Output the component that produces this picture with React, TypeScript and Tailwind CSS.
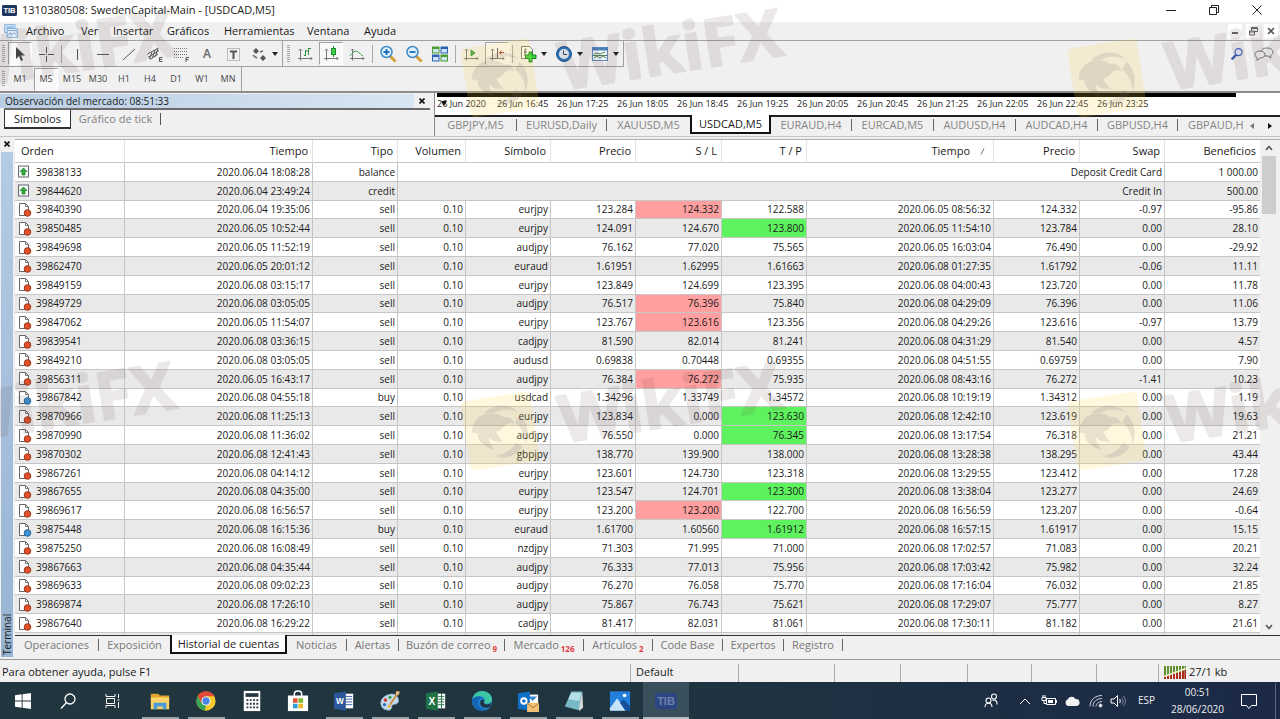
import { clsx } from "clsx";
import type { ReactNode } from "react";

type Deal = [
  order: string,
  opened: string,
  type: string,
  volume: string,
  symbol: string,
  price: string,
  sl: string,
  tp: string,
  closed: string,
  closePrice: string,
  swap: string,
  profit: string,
  hit?: "sl" | "tp"
];

const deals: Deal[] = [
  ["39840390", "2020.06.04 19:35:06", "sell", "0.10", "eurjpy", "123.284", "124.332", "122.588", "2020.06.05 08:56:32", "124.332", "-0.97", "-95.86", "sl"],
  ["39850485", "2020.06.05 10:52:44", "sell", "0.10", "eurjpy", "124.091", "124.670", "123.800", "2020.06.05 11:54:10", "123.784", "0.00", "28.10", "tp"],
  ["39849698", "2020.06.05 11:52:19", "sell", "0.10", "audjpy", "76.162", "77.020", "75.565", "2020.06.05 16:03:04", "76.490", "0.00", "-29.92"],
  ["39862470", "2020.06.05 20:01:12", "sell", "0.10", "euraud", "1.61951", "1.62995", "1.61663", "2020.06.08 01:27:35", "1.61792", "-0.06", "11.11"],
  ["39849159", "2020.06.08 03:15:17", "sell", "0.10", "eurjpy", "123.849", "124.699", "123.395", "2020.06.08 04:00:43", "123.720", "0.00", "11.78"],
  ["39849729", "2020.06.08 03:05:05", "sell", "0.10", "audjpy", "76.517", "76.396", "75.840", "2020.06.08 04:29:09", "76.396", "0.00", "11.06", "sl"],
  ["39847062", "2020.06.05 11:54:07", "sell", "0.10", "eurjpy", "123.767", "123.616", "123.356", "2020.06.08 04:29:26", "123.616", "-0.97", "13.79", "sl"],
  ["39839541", "2020.06.08 03:36:15", "sell", "0.10", "cadjpy", "81.590", "82.014", "81.241", "2020.06.08 04:31:29", "81.540", "0.00", "4.57"],
  ["39849210", "2020.06.08 03:05:05", "sell", "0.10", "audusd", "0.69838", "0.70448", "0.69355", "2020.06.08 04:51:55", "0.69759", "0.00", "7.90"],
  ["39856311", "2020.06.05 16:43:17", "sell", "0.10", "audjpy", "76.384", "76.272", "75.935", "2020.06.08 08:43:16", "76.272", "-1.41", "10.23", "sl"],
  ["39867842", "2020.06.08 04:55:18", "buy", "0.10", "usdcad", "1.34296", "1.33749", "1.34572", "2020.06.08 10:19:19", "1.34312", "0.00", "1.19"],
  ["39870966", "2020.06.08 11:25:13", "sell", "0.10", "eurjpy", "123.834", "0.000", "123.630", "2020.06.08 12:42:10", "123.619", "0.00", "19.63", "tp"],
  ["39870990", "2020.06.08 11:36:02", "sell", "0.10", "audjpy", "76.550", "0.000", "76.345", "2020.06.08 13:17:54", "76.318", "0.00", "21.21", "tp"],
  ["39870302", "2020.06.08 12:41:43", "sell", "0.10", "gbpjpy", "138.770", "139.900", "138.000", "2020.06.08 13:28:38", "138.295", "0.00", "43.44"],
  ["39867261", "2020.06.08 04:14:12", "sell", "0.10", "eurjpy", "123.601", "124.730", "123.318", "2020.06.08 13:29:55", "123.412", "0.00", "17.28"],
  ["39867655", "2020.06.08 04:35:00", "sell", "0.10", "eurjpy", "123.547", "124.701", "123.300", "2020.06.08 13:38:04", "123.277", "0.00", "24.69", "tp"],
  ["39869617", "2020.06.08 16:56:57", "sell", "0.10", "eurjpy", "123.200", "123.200", "122.700", "2020.06.08 16:56:59", "123.207", "0.00", "-0.64", "sl"],
  ["39875448", "2020.06.08 16:15:36", "buy", "0.10", "euraud", "1.61700", "1.60560", "1.61912", "2020.06.08 16:57:15", "1.61917", "0.00", "15.15", "tp"],
  ["39875250", "2020.06.08 16:08:49", "sell", "0.10", "nzdjpy", "71.303", "71.995", "71.000", "2020.06.08 17:02:57", "71.083", "0.00", "20.21"],
  ["39867663", "2020.06.08 04:35:44", "sell", "0.10", "audjpy", "76.333", "77.013", "75.956", "2020.06.08 17:03:42", "75.982", "0.00", "32.24"],
  ["39869633", "2020.06.08 09:02:23", "sell", "0.10", "audjpy", "76.270", "76.058", "75.770", "2020.06.08 17:16:04", "76.032", "0.00", "21.85"],
  ["39869874", "2020.06.08 17:26:10", "sell", "0.10", "audjpy", "75.867", "76.743", "75.621", "2020.06.08 17:29:07", "75.777", "0.00", "8.27"],
  ["39867640", "2020.06.08 16:29:22", "sell", "0.10", "cadjpy", "81.417", "82.031", "81.061", "2020.06.08 17:30:11", "81.182", "0.00", "21.61"],
  ["39877198", "2020.06.08 17:11:38", "sell", "0.10", "eurjpy", "122.648", "124.800", "122.680", "2020.06.08 17:30:38", "122.600", "0.00", "4.83"],
];

const transfers = [
  { order: "39838133", time: "2020.06.04 18:08:28", type: "balance", comment: "Deposit Credit Card", amount: "1 000.00" },
  { order: "39844620", time: "2020.06.04 23:49:24", type: "credit", comment: "Credit In", amount: "500.00" },
];

const columns = [
  { label: "Orden", width: "w-[110px]" },
  { label: "Tiempo", width: "w-[188px]" },
  { label: "Tipo", width: "w-[85px]" },
  { label: "Volumen", width: "w-[68px]" },
  { label: "Símbolo", width: "w-[85px]" },
  { label: "Precio", width: "w-[85px]" },
  { label: "S / L", width: "w-[86px]" },
  { label: "T / P", width: "w-[85px]" },
  { label: "Tiempo", width: "w-[187px]", sorted: true },
  { label: "Precio", width: "w-[86px]" },
  { label: "Swap", width: "w-[85px]" },
  { label: "Beneficios", width: "w-[96px]" },
];

const chartTabs = [
  { label: "GBPJPY,M5", width: "w-[82px]" },
  { label: "EURUSD,Daily", width: "w-[90px]" },
  { label: "XAUUSD,M5", width: "w-[83px]" },
  { label: "USDCAD,M5", width: "w-[81px]", active: true },
  { label: "EURAUD,H4", width: "w-[81px]" },
  { label: "EURCAD,M5", width: "w-[82px]" },
  { label: "AUDUSD,H4", width: "w-[82px]" },
  { label: "AUDCAD,H4", width: "w-[82px]" },
  { label: "GBPUSD,H4", width: "w-[80px]" },
];

const chartTimes = [
  "26 Jun 2020", "26 Jun 16:45", "26 Jun 17:25", "26 Jun 18:05", "26 Jun 18:45", "26 Jun 19:25",
  "26 Jun 20:05", "26 Jun 20:45", "26 Jun 21:25", "26 Jun 22:05", "26 Jun 22:45", "26 Jun 23:25",
];

const terminalTabs = [
  { label: "Operaciones", width: "w-[84px]" },
  { label: "Exposición", width: "w-[71px]", last: true },
  { label: "Historial de cuentas", width: "w-[117px]", active: true },
  { label: "Noticias", width: "w-[60px]" },
  { label: "Alertas", width: "w-[52px]" },
  { label: "Buzón de correo", badge: "9", width: "w-[106px]" },
  { label: "Mercado", badge: "126", width: "w-[79px]" },
  { label: "Artículos", badge: "2", width: "w-[69px]" },
  { label: "Code Base", width: "w-[70px]" },
  { label: "Expertos", width: "w-[61px]" },
  { label: "Registro", width: "w-[59px]" },
];

const timeframes = ["M1", "M5", "M15", "M30", "H1", "H4", "D1", "W1", "MN"];
const menus = [
  { label: "Archivo", width: "w-[55px]" },
  { label: "Ver", width: "w-[32px]" },
  { label: "Insertar", width: "w-[54px]" },
  { label: "Gráficos", width: "w-[57px]" },
  { label: "Herramientas", width: "w-[83px]" },
  { label: "Ventana", width: "w-[57px]" },
  { label: "Ayuda", width: "w-[50px]" },
];

function Icon({ size = 18, children }: { size?: number; children: ReactNode }) {
  return (
    <svg width={size} height={size} viewBox="0 0 18 18" fill="none" className="shrink-0" aria-hidden="true">
      {children}
    </svg>
  );
}

function Grip() {
  return (
    <div className="mx-0.5 my-1 w-[3px] shrink-0 self-stretch bg-[repeating-linear-gradient(#a5a5a5_0_1px,#f0f0f0_1px_2px)]" />
  );
}

function Divider() {
  return <div className="mx-0.5 h-[18px] w-px shrink-0 bg-[#a8a8a8]" />;
}

function ToolButton({ label, pressed, children }: { label: string; pressed?: boolean; children: ReactNode }) {
  return (
    <button
      type="button"
      aria-label={label}
      aria-pressed={pressed}
      className={clsx(
        "mx-px flex h-[23px] w-6 shrink-0 items-center justify-center border",
        pressed ? "border-[#a0a0a0] border-r-white border-b-white bg-[#f8f8f8]" : "border-transparent"
      )}
    >
      {children}
    </button>
  );
}

function Caret() {
  return (
    <svg width="6" height="4" viewBox="0 0 6 4" className="shrink-0" aria-hidden="true">
      <path d="M0 0h6L3 4z" fill="#222" />
    </svg>
  );
}

function Axes() {
  return <path d="M4.500 4v11.500M2 13.500h14M3 5.500L4.500 4 6 5.500M14.500 12l1.500 1.500-1.500 1.500" stroke="#777" />;
}

function TibLogo({ dim }: { dim?: boolean }) {
  return (
    <svg width={dim ? 22 : 15} height={dim ? 16 : 11} viewBox="0 0 22 16" aria-hidden="true">
      <rect width="22" height="16" rx="2" fill={dim ? "#2c4684" : "#1f3760"} />
      <text x="11" y="12" textAnchor="middle" fontSize="11" fontWeight="700" fontFamily="Liberation Sans" fill={dim ? "#6f80a8" : "#fff"}>
        TIB
      </text>
    </svg>
  );
}

function TitleBar() {
  return (
    <header className="flex h-[22px] items-center bg-white pb-0.5 pl-0.5">
      <TibLogo />
      <h1 className="ml-[5px] flex-1 text-[11px]">1310380508: SwedenCapital-Main - [USDCAD,M5]</h1>
      <button type="button" aria-label="Minimizar" className="flex w-[43px] justify-center">
        <svg width="12" height="12" stroke="#222"><path d="M1 6.500h10" /></svg>
      </button>
      <button type="button" aria-label="Restaurar" className="flex w-[43px] justify-center">
        <svg width="12" height="12" stroke="#222" fill="none"><path d="M1.500 3.500h7v7h-7zM3.500 3V1.500h7v7H9" /></svg>
      </button>
      <button type="button" aria-label="Cerrar" className="mr-0.5 flex w-[43px] justify-center">
        <svg width="12" height="12" stroke="#222"><path d="M1.500 1.500l9 9M10.500 1.500l-9 9" /></svg>
      </button>
    </header>
  );
}

function MenuBar() {
  return (
    <nav className="flex h-[19px] items-center border-b border-[#a0a0a0] pl-1">
      <Icon size={14}>
        <rect x="1" y="1" width="13" height="10" fill="#dcebfa" stroke="#5e9bd6" />
        <rect x="4" y="6" width="13" height="11" fill="#eef6fd" stroke="#5e9bd6" />
        <path d="M3 4h9M5 8.500h11M6 14l2-3 2 3 3-3 2 3" stroke="#4b88c7" />
      </Icon>
      <ul className="ml-2 flex flex-1">
        {menus.map((menu) => (
          <li key={menu.label} className={menu.width}>
            <button type="button" className="whitespace-nowrap">{menu.label}</button>
          </li>
        ))}
      </ul>
      <div className="flex gap-1 pr-0.5">
        <button type="button" aria-label="Minimizar gráfico" className="flex size-[14px] items-center justify-center bg-white">
          <svg width="8" height="8" stroke="#666" strokeWidth="2"><path d="M1 6h6" /></svg>
        </button>
        <button type="button" aria-label="Restaurar gráfico" className="flex size-[14px] items-center justify-center bg-white">
          <svg width="9" height="9" stroke="#666" fill="none"><path d="M.5 4h5v4h-5zM2.500 3.500v-3h6v4H6M.5 5h5M3 1.500h5" /></svg>
        </button>
        <button type="button" aria-label="Cerrar gráfico" className="flex size-[14px] items-center justify-center bg-white">
          <svg width="8" height="8" stroke="#555" strokeWidth="1.600"><path d="M1 1l6 6M7 1L1 7" /></svg>
        </button>
      </div>
    </nav>
  );
}

function Toolbar() {
  return (
    <div className="flex h-[26px] items-center">
      <div className="flex h-full items-center border-r border-b border-[#a0a0a0] pr-1">
        <Grip />
        <ToolButton label="Cursor" pressed>
          <Icon><path d="M5 2v12l3-3 2 5 2-1-2-4.500h4z" fill="#444" /></Icon>
        </ToolButton>
        <ToolButton label="Cruz">
          <Icon><path d="M9.500 2v6M9.500 11v6M2 9.500h6M11 9.500h6M9 9.500h1" stroke="#555" /></Icon>
        </ToolButton>
        <Divider />
        <ToolButton label="Línea vertical">
          <Icon><path d="M9.500 4v11" stroke="#555" /></Icon>
        </ToolButton>
        <ToolButton label="Línea horizontal">
          <Icon><path d="M3 9.500h12" stroke="#555" /></Icon>
        </ToolButton>
        <ToolButton label="Línea de tendencia">
          <Icon><path d="M3 15L15 4" stroke="#555" /></Icon>
        </ToolButton>
        <ToolButton label="Canal equidistante">
          <Icon>
            <path d="M1.500 9l10-5.500M2 12.500l11-7M4 14.500l8-5.500M3.500 14L6 7M6.500 13L9 5M9.500 11.500L12 3" stroke="#555" />
            <path d="M16.500 12.500h-3v4h3M13.500 14.500h2.500" stroke="#555" />
          </Icon>
        </ToolButton>
        <ToolButton label="Fibonacci">
          <Icon>
            <path d="M2 3.500h13M2 6.500h13M2 9.500h13M2 12.500h10" stroke="#777" strokeDasharray="1 1" />
            <path d="M17 12.500h-3V17M14 14.500h2.500" stroke="#555" />
          </Icon>
        </ToolButton>
        <ToolButton label="Texto">
          <span className="text-xs font-semibold text-[#666]">A</span>
        </ToolButton>
        <ToolButton label="Etiqueta de texto">
          <Icon>
            <rect x="3.500" y="3.500" width="12" height="12" stroke="#888" strokeDasharray="1 1" />
            <path d="M6 6.500h7M9.500 6v8" stroke="#555" strokeWidth="2" />
          </Icon>
        </ToolButton>
        <ToolButton label="Flechas">
          <Icon>
            <path d="M3 6l3-3 3 3-3 3zM10 13l3-3 3 3-3 3z" fill="#555" />
            <path d="M3 10l2 2 2 1M10 7l3-1" stroke="#666" strokeWidth="1.500" />
          </Icon>
        </ToolButton>
        <Caret />
      </div>
      <div className="flex h-full items-center border-r border-b border-[#a0a0a0] pr-1 pl-0.5">
        <Grip />
        <ToolButton label="Gráfico de barras">
          <Icon><Axes /><path d="M9.500 5v6M9 10.500H8M10 6h2M12.500 3v7M12 3.500h3" stroke="#2f8f3a" /></Icon>
        </ToolButton>
        <ToolButton label="Velas japonesas" pressed>
          <Icon><Axes /><path d="M11.500 1v11" stroke="#1e8b2c" /><rect x="9.500" y="3.500" width="4" height="6" fill="#3bd24c" stroke="#1e8b2c" /></Icon>
        </ToolButton>
        <ToolButton label="Gráfico de línea">
          <Icon><Axes /><path d="M2 11c3-4 5-6 8-4 2 1.500 3 3 5 4" stroke="#45a050" /></Icon>
        </ToolButton>
        <Divider />
        <ToolButton label="Acercar">
          <Icon>
            <path d="M11 11l5.500 5.500" stroke="#d3a233" strokeWidth="3" />
            <circle cx="7.500" cy="7" r="5.500" fill="#dff0fb" stroke="#3e8ac7" strokeWidth="1.500" />
            <path d="M7.500 4v6M4.500 7h6" stroke="#1f6fb8" strokeWidth="1.800" />
          </Icon>
        </ToolButton>
        <ToolButton label="Alejar">
          <Icon>
            <path d="M11 11l5.500 5.500" stroke="#d3a233" strokeWidth="3" />
            <circle cx="7.500" cy="7" r="5.500" fill="#dff0fb" stroke="#3e8ac7" strokeWidth="1.500" />
            <path d="M4.500 7h6" stroke="#1f6fb8" strokeWidth="1.800" />
          </Icon>
        </ToolButton>
        <ToolButton label="Mosaico">
          <Icon>
            <path d="M1 1.500h7.500v7H1zM9.500 9.500H17v7H9.500z" fill="#4c9b2f" />
            <path d="M9.500 1.500H17v7H9.500zM1 9.500h7.500v7H1z" fill="#2b62b8" />
            <path d="M2 4h5.500v3.500H2zM10.500 4H16v3.500h-5.500zM2 12h5.500v3.500H2zM10.500 12H16v3.500h-5.500z" fill="#cfe5f7" />
          </Icon>
        </ToolButton>
        <Divider />
        <ToolButton label="Desplazamiento automático">
          <Icon><Axes /><path d="M9 5v6l4-3z" fill="#3fae4c" stroke="#2f8f3a" /></Icon>
        </ToolButton>
        <ToolButton label="Desplazar gráfico" pressed>
          <Icon><Axes /><path d="M9.500 3v10" stroke="#555" /><path d="M11 7.500h5M13.500 5.500l-2 2 2 2" stroke="#b03a2a" /></Icon>
        </ToolButton>
        <Divider />
        <ToolButton label="Indicadores">
          <Icon>
            <path d="M2.500 1.500h8l3 3v9h-11z" fill="#fff" stroke="#777" />
            <path d="M7.500 4H6v7M5 7h3" stroke="#555" />
            <path d="M10 7h3v3h4v3.500h-4V17h-3v-3.500H6.500V10H10z" fill="#2fd33b" stroke="#13831c" />
          </Icon>
        </ToolButton>
        <Caret />
        <div className="w-1" />
        <ToolButton label="Periodos">
          <Icon>
            <circle cx="9" cy="9" r="7.500" fill="#2c75bd" stroke="#1d5592" />
            <circle cx="9" cy="9" r="5" fill="#e9f4fc" />
            <path d="M8.500 5.500V9.500H12" stroke="#444" />
          </Icon>
        </ToolButton>
        <Caret />
        <div className="w-1" />
        <ToolButton label="Plantillas">
          <Icon>
            <rect x="1.500" y="2.500" width="15" height="13" fill="#f4f9fd" stroke="#5a8fc2" />
            <path d="M1 4h16" stroke="#4a82ba" strokeWidth="3" />
            <path d="M3 9l3-1 3 1 5-2M3 13l3-2 3 2 3-2 3 2M2 10.500h14" stroke="#4e7e58" />
          </Icon>
        </ToolButton>
        <Caret />
      </div>
      <div className="flex flex-1 justify-end gap-2.5 pr-1.5">
        <button type="button" aria-label="Buscar">
          <Icon size={14}>
            <circle cx="11" cy="6.500" r="4.500" fill="#e8f0fc" stroke="#3662c0" strokeWidth="1.600" />
            <path d="M8 10l-6 6" stroke="#2d57b8" strokeWidth="2.800" />
          </Icon>
        </button>
        <button type="button" aria-label="Chat">
          <svg width="20" height="16" viewBox="0 0 20 16" fill="#f4f4f4" stroke="#777" aria-hidden="true">
            <path d="M13 2c3.500 0 6 1.600 6 4 0 1.600-1 2.800-2.500 3.400L17 12l-3-2H12C9 10 7 8.400 7 6s2.500-4 6-4z" />
            <path d="M6 5c3 0 5 1.400 5 3.500S9 12 6 12L3 14.500V11.500C2 11 1 10 1 8.500 1 6.400 3 5 6 5z" />
          </svg>
        </button>
      </div>
    </div>
  );
}

function TimeframeBar() {
  return (
    <div className="flex h-6">
      <div className="flex items-center border-r border-[#a0a0a0]">
        <Grip />
        {timeframes.map((tf) => (
          <button
            key={tf}
            type="button"
            aria-pressed={tf === "M5"}
            className={clsx(
              "mx-px h-[23px] w-6 border text-[9px] text-[#444]",
              tf === "M5" ? "border-[#a0a0a0] border-r-white border-b-white bg-[#f8f8f8]" : "border-transparent"
            )}
          >
            {tf}
          </button>
        ))}
      </div>
    </div>
  );
}

function MarketWatch() {
  return (
    <section className="flex w-[435px] shrink-0 flex-col border-r border-[#8a8a8a]">
      <div className="flex h-[15px] items-center">
        <h2 className="flex-1 bg-linear-to-r from-[#b9cde3] to-[#d8e6f3] pl-[5px] text-[10px] leading-[14px]">
          Observación del mercado: 08:51:33
        </h2>
        <button type="button" aria-label="Cerrar" className="mr-1 flex w-4 justify-center">
          <svg width="6" height="6" stroke="#111" strokeWidth="1.600"><path d="M.5.5l5 5M5.500.5l-5 5" /></svg>
        </button>
      </div>
      <div className="mx-1 flex flex-1 border-t-2 border-[#6b6b6b] text-[11px]">
        <button type="button" className="h-[19px] w-[67px] border-x border-b-2 border-[#333] bg-white leading-4">
          Símbolos
        </button>
        <button type="button" className="my-[3px] h-3 w-[90px] border-r border-[#555] leading-3 text-[#808080]">
          Gráfico de tick
        </button>
      </div>
    </section>
  );
}

function ChartStrip() {
  return (
    <section className="flex min-w-0 flex-1 flex-col">
      <div className="h-[22px] bg-white pr-11 pl-0.5">
        <div className="h-1 bg-black" />
        <div className="flex pt-px text-[9px] leading-3">
          {chartTimes.map((time, i) => (
            <div key={time} className="flex w-[60px] shrink-0 whitespace-nowrap">
              {i === 0 && (
                <svg width="6" height="12" viewBox="0 0 6 12" className="-mr-1.5 shrink-0 translate-x-1" aria-hidden="true">
                  <path d="M0 3h6L3 8z" fill="#111" />
                </svg>
              )}
              {time}
            </div>
          ))}
        </div>
      </div>
      <div className="flex h-[19px] border-t-2 border-[#222] text-[11px]">
        {chartTabs.map((tab, i) => {
          const divided = !tab.active && !chartTabs[i + 1]?.active;
          return tab.active ? (
            <button
              key={tab.label}
              type="button"
              className={clsx("-mt-0.5 h-[19px] shrink-0 border-2 border-t-0 border-[#111] bg-white leading-[17px]", tab.width)}
            >
              {tab.label}
            </button>
          ) : (
            <button
              key={tab.label}
              type="button"
              className={clsx(
                "my-0.5 h-3 shrink-0 text-center leading-3 whitespace-nowrap text-[#858585]",
                divided && "border-r border-[#666]",
                tab.width
              )}
            >
              {tab.label}
            </button>
          );
        })}
        <button type="button" className="my-0.5 h-3 min-w-0 flex-1 overflow-hidden pl-2.5 text-left leading-3 text-[#858585]">
          GBPAUD,H1
        </button>
        <button type="button" aria-label="Anterior" className="flex w-4 items-center justify-center">
          <svg width="4" height="6"><path d="M4 0v6L0 3z" fill="#777" /></svg>
        </button>
        <button type="button" aria-label="Siguiente" className="flex w-5 items-center justify-center">
          <svg width="4" height="6"><path d="M0 0v6l4-3z" fill="#111" /></svg>
        </button>
      </div>
    </section>
  );
}

function DepositIcon() {
  return (
    <svg width="12" height="15" viewBox="0 0 12 15" className="shrink-0" aria-hidden="true">
      <rect x=".5" y="2" width="10" height="11" fill="#f3fbf3" stroke="#667" />
      <path d="M5.500 4L9 7.500H7V11H4V7.500H2z" fill="#2fae3d" stroke="#146b1e" strokeWidth=".6" />
    </svg>
  );
}

function DealIcon({ buy }: { buy: boolean }) {
  return (
    <svg width="14" height="15" viewBox="0 0 14 15" className="shrink-0" aria-hidden="true">
      <path d="M1.500 1.500h6l3 3v9h-9z" fill="#fff" stroke="#666" />
      <path d="M7.500 1.500v3h3" fill="none" stroke="#777" />
      <circle cx="9.500" cy="11" r="3.300" fill={buy ? "#3d94d6" : "#e0512c"} stroke={buy ? "#22649c" : "#9c3417"} />
    </svg>
  );
}

const cell = "border-r border-b border-[#c6c6c6] p-0 pr-0.5";

function HistoryTable() {
  return (
    <table className="h-[512px] w-full table-fixed border-separate border-spacing-0 text-right text-[10px] leading-3 whitespace-nowrap">
      <thead>
        <tr className="h-[23px] bg-white text-[11px]">
          {columns.map((col, i) => (
            <th
              key={i}
              scope="col"
              className={clsx(
                "border-r border-b border-[#c6c6c6] border-r-[#e2e2e2] p-0 font-normal",
                i === 0 ? "pl-1.5 text-left" : "pr-1",
                col.width
              )}
            >
              {col.sorted ? (
                <span className="inline-flex items-center gap-2.5 pr-1">
                  {col.label}
                  <svg width="5" height="7" stroke="#777"><path d="M1 6.500L4 .5" /></svg>
                </span>
              ) : (
                col.label
              )}
            </th>
          ))}
        </tr>
      </thead>
      <tbody>
        {transfers.map((row) => (
          <tr key={row.order} className="bg-white even:bg-[#e9e9e9]">
            <td className={cell}>
              <div className="flex items-center gap-1.5 pl-[3px]"><DepositIcon />{row.order}</div>
            </td>
            <td className={cell}>{row.time}</td>
            <td className={cell}>{row.type}</td>
            <td className={cell} colSpan={8}>{row.comment}</td>
            <td className={cell}>{row.amount}</td>
          </tr>
        ))}
        {deals.map((deal) => {
          const [order, ...values] = deal.slice(0, 12);
          const hit = deal[12];
          return (
            <tr key={order} className="bg-white even:bg-[#e9e9e9]">
              <td className={cell}>
                <div className="flex items-center gap-1 pl-[3px]"><DealIcon buy={deal[2] === "buy"} />{order}</div>
              </td>
              {values.map((value, i) => (
                <td
                  key={i}
                  className={clsx(
                    cell,
                    i === 5 && hit === "sl" && "bg-[#ff9f9f]",
                    i === 6 && hit === "tp" && "bg-[#5ff25f]"
                  )}
                >
                  {value}
                </td>
              ))}
            </tr>
          );
        })}
      </tbody>
    </table>
  );
}

function Terminal() {
  return (
    <section className="flex min-h-0 flex-1 pt-0.5">
      <aside className="flex w-[13px] shrink-0 flex-col items-center">
        <button type="button" aria-label="Cerrar terminal" className="flex h-[13px] items-center pb-1">
          <svg width="6" height="6" stroke="#111" strokeWidth="1.600"><path d="M.5.5l5 5M5.500.5l-5 5" /></svg>
        </button>
        <h2 className="flex w-3 flex-1 rotate-180 bg-linear-to-t from-[#b3cbe6] to-[#98b4d3] pt-0.5 text-[10px] leading-3 [writing-mode:vertical-rl]">
          Terminal
        </h2>
      </aside>
      <div className="ml-[2px] flex min-w-0 flex-1 flex-col border-t border-[#aaa]">
        <div className="flex min-h-0 flex-1 pr-[3px]">
          <div className="min-w-0 flex-1 overflow-hidden bg-white">
            <HistoryTable />
          </div>
          <div className="flex w-[17px] flex-col items-center bg-[#f0f0f0]">
            <button type="button" aria-label="Subir" className="flex h-4 items-center">
              <svg width="8" height="6" fill="none" stroke="#555" strokeWidth="1.600"><path d="M1 5l3-3.500L7 5" /></svg>
            </button>
            <div className="h-[58px] w-[14px] bg-[#cdcdcd]" />
            <div className="flex-1" />
            <button type="button" aria-label="Bajar" className="flex h-4 items-center">
              <svg width="8" height="6" fill="none" stroke="#555" strokeWidth="1.600"><path d="M1 1l3 3.500L7 1" /></svg>
            </button>
          </div>
        </div>
        <div className="flex h-[22px] border-t border-[#333] text-[11px]">
          {terminalTabs.map((tab) => (
            <button
              key={tab.label}
              type="button"
              className={clsx(
                "flex shrink-0 justify-center whitespace-nowrap",
                tab.active
                  ? "-mt-px h-[19px] border-2 border-t-0 border-[#111] bg-white leading-[17px]"
                  : "my-[3px] h-3 leading-3 text-[#777]",
                !tab.active && !tab.last && "border-r border-[#666]",
                tab.width
              )}
            >
              {tab.label}
              {tab.badge && <sub className="ml-0.5 text-[8px] leading-4 font-bold text-[#e23a44]">{tab.badge}</sub>}
            </button>
          ))}
        </div>
      </div>
    </section>
  );
}

function StatusBar() {
  return (
    <footer className="mt-0.5 flex h-[23px] items-stretch border-t border-[#999] pt-1 text-[11px] leading-4">
      <p className="flex-1 border-r border-[#aaa] pl-0.5">Para obtener ayuda, pulse F1</p>
      <p className="w-[108px] border-r border-[#aaa] pl-[5px]">Default</p>
      <div className="w-[96px] border-r border-[#aaa]" />
      <div className="w-[66px] border-r border-[#aaa]" />
      <div className="w-[67px] border-r border-[#aaa]" />
      <div className="w-[64px] border-r border-[#aaa]" />
      <div className="w-[65px] border-r border-[#aaa]" />
      <div className="w-[62px] border-r border-[#aaa]" />
      <div className="flex w-[121px] gap-[3px] pl-[5px]">
        <svg width="22" height="13" viewBox="0 0 22 13" className="mt-0.5" aria-hidden="true">
          <path d="M1 0v13M4 0v13M7 0v13M10 0v13M13 0v13M16 0v13M19 0v13M21.500 0v13" stroke="#5e8f2a" strokeWidth="2" />
          <path d="M1 11v2M4 10v3M7 9v4M10 8v5M13 7v6M16 6v7M19 5v8M21.500 4v9" stroke="#b02a20" strokeWidth="2" />
          <path d="M0 10.500L22 2.500" stroke="#f6efd2" strokeWidth="1.400" />
        </svg>
        27/1 kb
      </div>
    </footer>
  );
}

const apps: { label: string; running?: boolean; active?: boolean; art: ReactNode }[] = [
  {
    label: "Explorador",
    running: true,
    art: (
      <>
        <path d="M2 4h8l2 2h10v4H2z" fill="#e2a52b" />
        <path d="M2 8h20v13H2z" fill="#fbd367" />
        <path d="M5 21v-7h14v7h-4v-3H9v3z" fill="#4a9bd8" />
      </>
    ),
  },
  {
    label: "Chrome",
    running: true,
    art: (
      <>
        <circle cx="12" cy="12" r="10.500" fill="#f6c92f" />
        <path d="M2.900 6.700A10.500 10.500 0 0 1 21.100 6.700H12L7.500 14.600z" fill="#e04a3a" />
        <path d="M2.900 6.700L7.500 14.600 12 17.300l-1.300 5.100A10.500 10.500 0 0 1 2.900 6.700z" fill="#35a455" />
        <circle cx="12" cy="12" r="5" fill="#fff" />
        <circle cx="12" cy="12" r="4" fill="#4a86e8" />
      </>
    ),
  },
  {
    label: "Calculadora",
    art: (
      <>
        <path d="M3 1h18v22H3z" fill="#fff" />
        <path d="M5 3.500h14v4H5z" fill="#23353f" />
        <path d="M6 11h13M6 15h13M6 19h13" stroke="#23353f" strokeWidth="2" strokeDasharray="2 1.600" />
      </>
    ),
  },
  {
    label: "Microsoft Store",
    art: (
      <>
        <path d="M8 7V4a4 3 0 0 1 8 0v3" fill="none" stroke="#fff" strokeWidth="1.600" />
        <path d="M1 6h22v17H1z" fill="#fff" />
        <path d="M6.500 9h5v5h-5z" fill="#e65430" />
        <path d="M12.500 9h5v5h-5z" fill="#7cb82e" />
        <path d="M6.500 15h5v5h-5z" fill="#2b9fe0" />
        <path d="M12.500 15h5v5h-5z" fill="#f4b825" />
      </>
    ),
  },
  {
    label: "Word",
    running: true,
    art: (
      <>
        <path d="M11 4h11v16H11z" fill="#fff" />
        <path d="M14 7h7M14 10h7M14 13h7M14 16h7" stroke="#2b579a" />
        <path d="M1 3.500L14 1.500v21L1 20.500z" fill="#2b579a" />
        <text x="7.500" y="15.500" textAnchor="middle" fontSize="9" fontWeight="700" fontFamily="Liberation Sans" fill="#fff">W</text>
      </>
    ),
  },
  {
    label: "Paint",
    running: true,
    art: (
      <>
        <path d="M11 5c6-2 11 2 10 8-1 3-4 2-6 3s0 5-4 6c-6 0-9-3-9-8 0-4 4-8 9-9z" fill="#c5dcec" stroke="#8fb2c9" />
        <circle cx="7" cy="11" r="2" fill="#cf3c36" />
        <circle cx="12" cy="8" r="1.800" fill="#3d9f4a" />
        <circle cx="6" cy="16" r="1.800" fill="#2f6fc0" />
        <circle cx="11" cy="18" r="1.600" fill="#e7b62b" />
        <path d="M12 16L20 4" stroke="#c98b3c" strokeWidth="2" />
        <path d="M18 5l1-4 4 1-2 4z" fill="#e3bd7c" />
      </>
    ),
  },
  {
    label: "Excel",
    running: true,
    art: (
      <>
        <path d="M11 4h11v16H11z" fill="#fff" />
        <path d="M14 7h7M14 10h7M14 13h7M14 16h7M18 4v16" stroke="#1f7246" />
        <path d="M1 3.500L14 1.500v21L1 20.500z" fill="#1f7246" />
        <text x="7.500" y="16" textAnchor="middle" fontSize="11" fontWeight="700" fontFamily="Liberation Sans" fill="#fff">X</text>
      </>
    ),
  },
  {
    label: "Edge",
    running: true,
    art: (
      <>
        <circle cx="12" cy="12" r="11" fill="#1c7fd0" />
        <path d="M1.500 10C3 4 7 1 12 1c7 0 11 5 11 9 0 4-4 5.500-7 5-2-.5-2-1.500-1-3 .5-3-2-5-5-5-4 0-7 1.500-8.500 3z" fill="#3cc6a4" />
        <path d="M1 11c3-5 9-5 12-2-4-1-6 3-5 7 1 3 4 5 9 5.500C8 25 .5 19 1 11z" fill="#1565b5" />
        <path d="M14.500 11c-1 2-1 4 1.500 4.500 2 .5 4 0 6-1.500l-1 4c-5 3-11 1-11-4 0-2 1-4 4.500-3z" fill="#22343f" />
      </>
    ),
  },
  {
    label: "Outlook",
    running: true,
    art: (
      <>
        <path d="M11 5h12v12H11z" fill="#fff" />
        <path d="M12 7h10l-5 5z" fill="#3a86cf" />
        <path d="M1 3.500L14 1.500v21L1 20.500z" fill="#0f6fc5" />
        <circle cx="7.500" cy="12" r="3" fill="none" stroke="#fff" strokeWidth="2" />
        <path d="M11 14h13v10H11z" fill="#f0c078" />
        <path d="M11 14l6.500 5.500L24 14" fill="none" stroke="#a46f24" />
      </>
    ),
  },
  {
    label: "Bloc de notas",
    running: true,
    art: (
      <>
        <path d="M9 2h12l1 17-4 4z" fill="#d5d8d4" />
        <path d="M9 2h12l-4 20-15-4z" fill="#76b8c4" />
        <path d="M9 3h11l-2 9-12-2z" fill="#b6e0e5" />
      </>
    ),
  },
  {
    label: "Fotos",
    running: true,
    art: (
      <>
        <path d="M1 1.500h22v21H1z" fill="#2180dd" />
        <path d="M1 20L9 9l9 13.500H1z" fill="#c7e3fa" />
        <path d="M12 14l4-4 7 8v4.500h-5z" fill="#15509c" />
        <circle cx="17" cy="6" r="2" fill="#fff" />
      </>
    ),
  },
  { label: "Terminal TIB", active: true, running: true, art: null },
];

function TaskBar() {
  return (
    <nav className="flex h-[37px] shrink-0 items-stretch bg-linear-to-r from-[#22363f] via-[#20343f] to-[#1b2947] text-[#f0f0f0]">
      <button type="button" aria-label="Inicio" className="flex w-[45px] items-center justify-center">
        <svg width="16" height="16" viewBox="0 0 16 16" fill="#fff"><path d="M0 2.200L6.700 1.300V7.500H0zM7.600 1.200L16 0v7.500H7.600zM0 8.400h6.700v6.300L0 13.800zM7.600 8.400H16V16l-8.400-1.200z" /></svg>
      </button>
      <button type="button" aria-label="Buscar" className="flex w-[45px] items-center justify-center">
        <svg width="16" height="16" viewBox="0 0 16 16" fill="none" stroke="#fff" strokeWidth="1.300"><circle cx="10" cy="6" r="5" /><path d="M6.500 9.500L1 15.500" /></svg>
      </button>
      <button type="button" aria-label="Vista de tareas" className="mr-0.5 flex w-[45px] items-center justify-center">
        <svg width="16" height="16" viewBox="0 0 16 16" fill="none" stroke="#fff"><path d="M1 1v2.500h9V1M1 15v-2.500h9V15M1.500 5.500h8v5h-8zM13.500 1v4M13.500 9v6M12.500 7h2" /></svg>
      </button>
      {apps.map((app) => (
        <button
          key={app.label}
          type="button"
          aria-label={app.label}
          className={clsx("flex w-[46px] flex-col items-center", app.active && "bg-[#3a4f5c]")}
        >
          <span className="flex flex-1 items-center pt-0.5">
            {app.active ? <TibLogo dim /> : <svg width="22" height="22" viewBox="0 0 24 24">{app.art}</svg>}
          </span>
          <span className={clsx("h-0.5", app.active ? "w-full bg-[#b4bdc2]" : "w-[37px]", app.running && !app.active && "bg-[#9aa6ac]")} />
        </button>
      ))}
      <div className="flex flex-1 items-center justify-end text-[11px]">
        <svg width="14" height="15" viewBox="0 0 14 15" fill="none" stroke="#fff" strokeWidth="1.100" aria-hidden="true">
          <circle cx="10" cy="3.500" r="2.500" /><circle cx="4.500" cy="7.500" r="2.500" /><path d="M1 14c0-5 7-5 7 0M8.500 7.500c2-1.500 5 0 4.500 4" />
        </svg>
        <svg width="12" height="8" viewBox="0 0 12 8" fill="none" stroke="#fff" className="ml-[21px]" aria-hidden="true"><path d="M1 7l5-5 5 5" /></svg>
        <svg width="16" height="12" viewBox="0 0 16 12" className="ml-2.5" aria-hidden="true">
          <path d="M5.500 3.500h9v6h-9z" fill="none" stroke="#fff" /><path d="M7 5h5v3H7z" fill="#fff" /><path d="M15.500 5v3M1 2.500h4v3H1zM3 5v3.500h2M2 0v2M4 0v2" stroke="#fff" fill="none" />
        </svg>
        <svg width="18" height="12" viewBox="0 0 16 12" className="ml-1.5" aria-hidden="true">
          <path d="M4 11a3.500 3.500 0 0 1-.5-6.500A4.500 4.500 0 0 1 11.500 4 3.500 3.500 0 0 1 12.500 11z" fill="#f1f1f1" />
        </svg>
        <svg width="14" height="14" viewBox="0 0 14 14" fill="none" stroke="#cfd5dd" className="ml-2" aria-hidden="true">
          <path d="M1 12.500C1 6 6 1.500 13 1.500M4 12.500c0-5 4-8 9-8M7 12.500c0-3 3-5 6-5" /><circle cx="11.500" cy="11.500" r="1.500" fill="#fff" />
        </svg>
        <svg width="16" height="14" viewBox="0 0 16 14" fill="none" stroke="#fff" className="ml-[7px]" aria-hidden="true">
          <path d="M1 5h3l3.500-3.500v11L4 9H1z" /><path d="M9.500 5c1 1 1 3 0 4" /><path d="M11.500 3.500c2 2 2 5 0 7M13.500 2c2.500 3 2.500 7 0 10" stroke="#7d8799" />
        </svg>
        <span className="ml-3 w-5 text-[10px]">ESP</span>
        <time className="ml-3 w-[55px] text-center text-[10px] leading-[17px]">
          00:51
          <br />
          28/06/2020
        </time>
        <svg width="16" height="16" viewBox="0 0 16 16" fill="none" stroke="#fff" className="ml-4" aria-hidden="true">
          <path d="M.5 1.500h15v11h-5L8 15.500l-2.500-3h-5z" />
        </svg>
        <div className="ml-[18px] h-9 w-px bg-[#5b667c]" />
        <div className="w-1" />
      </div>
    </nav>
  );
}

// Tiled brand stamp laid over the whole screen
function BrandStamp({ x, y }: { x: number; y: number }) {
  return (
    <g transform={`translate(${x} ${y}) rotate(-9)`}>
      <rect x="-35" y="-35" width="70" height="70" rx="6" fill="#ffd84d" fillOpacity="0.18" />
      <g fill="#6a5570" fillOpacity="0.15">
        <path d="M-13-20C-3-28 13-27 21-16c-8-5-17-6-24-3z" />
        <path d="M22-13c7 9 7 21 1 30 1-10-1-17-7-23z" />
        <path d="M20 19c-8 9-20 10-29 5 10 0 17-3 23-10z" />
        <path d="M-28-3c1-7 6-13 12-15 8-3 17 0 22 5 6 0 9 4 9 9-3-3-6-2-9-1-3 2-5 5-10 5 2 4 2 7 6 11-7 0-12-3-14-7-1 5 1 9 4 14-10-4-15-11-15-19l6 2c-4-2-7-3-11-4z" />
      </g>
      <text
        x="60"
        y="22"
        fontSize="66"
        fontWeight="700"
        fontFamily="Open Sans"
        fill="#5c3d3d"
        stroke="#5c3d3d"
        strokeWidth="2"
        strokeLinejoin="round"
        opacity="0.11"
      >
        WikiFX
      </text>
    </g>
  );
}

function BrandOverlay() {
  return (
    <svg className="pointer-events-none absolute inset-0 h-full w-full" aria-hidden="true">
      {[78, 431].map((y) => [-107, 500, 1107].map((x) => <BrandStamp key={`${x}-${y}`} x={x} y={y} />))}
    </svg>
  );
}

export default function App() {
  return (
    <div className="relative flex h-screen flex-col overflow-hidden bg-[#f0f0f0] font-['Open_Sans','Noto_Sans',sans-serif] text-[11px] text-[#1a1a1a]">
      <TitleBar />
      <MenuBar />
      <Toolbar />
      <TimeframeBar />
      <div className="flex h-[46px] shrink-0 border-t-2 border-b border-t-[#8c8c8c] border-b-[#c4c4c4]">
        <MarketWatch />
        <ChartStrip />
      </div>
      <Terminal />
      <StatusBar />
      <TaskBar />
      <BrandOverlay />
    </div>
  );
}
